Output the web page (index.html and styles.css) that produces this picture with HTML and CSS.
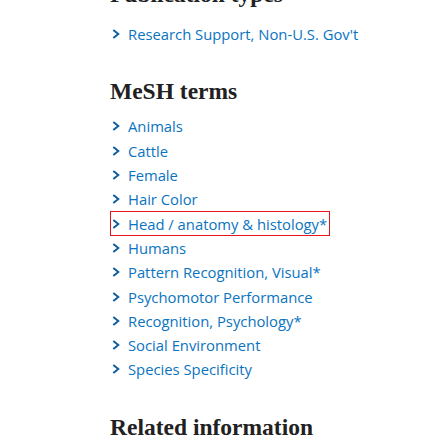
FILE: index.html
```html
<!DOCTYPE html>
<html>
<head>
<meta charset="utf-8">
<link rel="stylesheet" href="styles.css">
</head>
<body>
<main class="page">
  <section class="section">
    <h2 class="heading heading-first">Publication types</h2>
    <ul class="terms">
      <li class="term"><span class="chev"><svg viewBox="0 0 8 10" width="8" height="10"><path d="M1.3 1 L6.3 5 L1.3 9" fill="none" stroke="#0b5d9e" stroke-width="1.9"/></svg></span><a class="link">Research Support, Non-U.S. Gov't</a></li>
    </ul>
  </section>
  <section class="section">
    <h2 class="heading">MeSH terms</h2>
    <ul class="terms">
      <li class="term"><span class="chev"><svg viewBox="0 0 8 10" width="8" height="10"><path d="M1.3 1 L6.3 5 L1.3 9" fill="none" stroke="#0b5d9e" stroke-width="1.9"/></svg></span><a class="link">Animals</a></li>
      <li class="term"><span class="chev"><svg viewBox="0 0 8 10" width="8" height="10"><path d="M1.3 1 L6.3 5 L1.3 9" fill="none" stroke="#0b5d9e" stroke-width="1.9"/></svg></span><a class="link">Cattle</a></li>
      <li class="term"><span class="chev"><svg viewBox="0 0 8 10" width="8" height="10"><path d="M1.3 1 L6.3 5 L1.3 9" fill="none" stroke="#0b5d9e" stroke-width="1.9"/></svg></span><a class="link">Female</a></li>
      <li class="term"><span class="chev"><svg viewBox="0 0 8 10" width="8" height="10"><path d="M1.3 1 L6.3 5 L1.3 9" fill="none" stroke="#0b5d9e" stroke-width="1.9"/></svg></span><a class="link">Hair Color</a></li>
      <li class="term focused"><span class="chev"><svg viewBox="0 0 8 10" width="8" height="10"><path d="M1.3 1 L6.3 5 L1.3 9" fill="none" stroke="#0b5d9e" stroke-width="1.9"/></svg></span><a class="link">Head / anatomy &amp; histology*</a></li>
      <li class="term"><span class="chev"><svg viewBox="0 0 8 10" width="8" height="10"><path d="M1.3 1 L6.3 5 L1.3 9" fill="none" stroke="#0b5d9e" stroke-width="1.9"/></svg></span><a class="link">Humans</a></li>
      <li class="term"><span class="chev"><svg viewBox="0 0 8 10" width="8" height="10"><path d="M1.3 1 L6.3 5 L1.3 9" fill="none" stroke="#0b5d9e" stroke-width="1.9"/></svg></span><a class="link">Pattern Recognition, Visual*</a></li>
      <li class="term"><span class="chev"><svg viewBox="0 0 8 10" width="8" height="10"><path d="M1.3 1 L6.3 5 L1.3 9" fill="none" stroke="#0b5d9e" stroke-width="1.9"/></svg></span><a class="link">Psychomotor Performance</a></li>
      <li class="term"><span class="chev"><svg viewBox="0 0 8 10" width="8" height="10"><path d="M1.3 1 L6.3 5 L1.3 9" fill="none" stroke="#0b5d9e" stroke-width="1.9"/></svg></span><a class="link">Recognition, Psychology*</a></li>
      <li class="term"><span class="chev"><svg viewBox="0 0 8 10" width="8" height="10"><path d="M1.3 1 L6.3 5 L1.3 9" fill="none" stroke="#0b5d9e" stroke-width="1.9"/></svg></span><a class="link">Social Environment</a></li>
      <li class="term"><span class="chev"><svg viewBox="0 0 8 10" width="8" height="10"><path d="M1.3 1 L6.3 5 L1.3 9" fill="none" stroke="#0b5d9e" stroke-width="1.9"/></svg></span><a class="link">Species Specificity</a></li>
    </ul>
  </section>
  <section class="section">
    <h2 class="heading">Related information</h2>
  </section>
</main>
</body>
</html>
```
FILE: styles.css
```css
html, body {
  margin: 0;
  padding: 0;
  background: #ffffff;
}
.page {
  padding-left: 110px;
  margin-top: -21px;
}
.section {
  margin-bottom: 30px;
}
.heading {
  margin: 0 0 8px 0;
  font-family: "Liberation Serif", "DejaVu Serif", serif;
  font-weight: bold;
  font-size: 23.5px;
  line-height: 30px;
  color: #212121;
}
.heading-first {
  margin-bottom: 13px;
}
.terms {
  list-style: none;
  margin: 0;
  padding: 0;
}
.term {
  display: flex;
  align-items: center;
  width: fit-content;
  height: 24.3px;
  font-family: "Open Sans", "Noto Sans", sans-serif;
  font-size: 14.8px;
  color: #0071bc;
}
.chev {
  display: flex;
  width: 18px;
  padding-left: 2px;
  box-sizing: border-box;
}
.link {
  color: #0a74bf;
}
.focused {
  outline: 1px solid #e8141a;
  outline-offset: -1px;
  padding-right: 3px;
}
```
